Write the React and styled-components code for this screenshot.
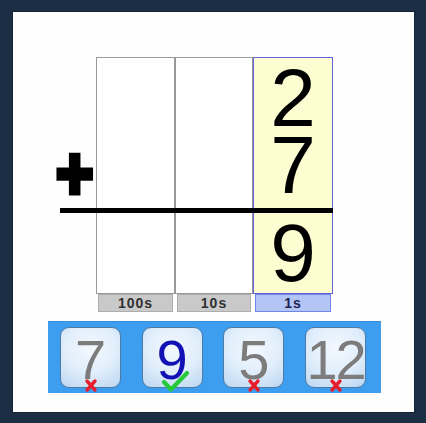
import React from "react";
import styled, { createGlobalStyle } from "styled-components";

const Global = createGlobalStyle`
  html, body { margin: 0; padding: 0; background: #1b2e44; }
  body { font-family: "Liberation Sans", Arial, sans-serif; }
`;

const Frame = styled.div`
  width: 426px;
  height: 423px;
  padding: 12px 0 0 13px;
  box-sizing: border-box;
`;

const Panel = styled.div`
  width: 401px;
  height: 400px;
  background: #fefefe;
  box-shadow: 0 0 0 1px #13233a;
  box-sizing: border-box;
  padding-top: 45px;
  display: flex;
  flex-direction: column;
  align-items: flex-start;
`;

const Board = styled.div`
  margin-left: 47px;
  display: grid;
  grid-template-columns: 36px 79px 78px 80px;
  grid-template-rows: 151px 5px 81px 18px;
`;

const OperatorCell = styled.div`
  grid-column: 1;
  grid-row: 1;
  display: flex;
  align-items: flex-end;
  padding-bottom: 3px;
`;

const Plus = styled.span`
  display: inline-block;
  font-family: "Liberation Sans", Arial, sans-serif;
  font-weight: 700;
  font-size: 64px;
  line-height: 64px;
  color: #000;
  -webkit-text-stroke: 4.5px #000;
  margin-left: -4px;
  transform: scaleY(1.16);
  transform-origin: 50% 49%;
`;

const Cell = styled.div`
  box-sizing: border-box;
  grid-column: ${(p) => p.$col};
  grid-row: ${(p) => p.$row};
  background: ${(p) => (p.$active ? "#fdfdd2" : "#ffffff")};
  border: 1px solid ${(p) => (p.$active ? "#6262e2" : "#999999")};
  border-${(p) => (p.$row === 1 ? "bottom" : "top")}: none;
  display: flex;
  flex-direction: column;
  align-items: center;
  padding-top: ${(p) => (p.$row === 1 ? "6px" : "0")};
`;

const Digit = styled.div`
  font-family: "Liberation Sans", Arial, sans-serif;
  font-size: 82px;
  color: #000;
  line-height: ${(p) => p.$lh}px;
  height: ${(p) => p.$lh}px;
`;

const Rule = styled.div`
  grid-column: 1 / 5;
  grid-row: 2;
  background: #000;
`;

const Label = styled.div`
  grid-column: ${(p) => p.$col};
  grid-row: 4;
  margin: 0 2px;
  box-sizing: border-box;
  background: ${(p) => (p.$active ? "#b3c5f5" : "#c9c9c9")};
  border: 1px solid ${(p) => (p.$active ? "#7086e4" : "#acacac")};
  color: ${(p) => (p.$active ? "#1c2450" : "#303030")};
  font-family: "Liberation Sans", Arial, sans-serif;
  font-weight: 700;
  font-size: 14px;
  letter-spacing: 1px;
  line-height: 16px;
  text-align: center;
`;

const Tray = styled.div`
  margin-top: 9px;
  margin-left: 35px;
  width: 333px;
  height: 72px;
  box-sizing: border-box;
  background: #3d9ef0;
  border-top: 1px solid #3590e0;
  padding: 5px 0 0 12px;
  display: flex;
  gap: 20.7px;
`;

const Tile = styled.div`
  position: relative;
  width: 61px;
  height: 61px;
  box-sizing: border-box;
  border: 1px solid #4d7aa6;
  border-radius: 9px;
  background: radial-gradient(
    ellipse 80% 75% at 50% 35%,
    #f3f8fe 0%,
    #e1eefb 55%,
    #bfd9f2 100%
  );
  padding-top: 4px;
  text-align: center;
  font-family: "Liberation Sans", Arial, sans-serif;
  font-size: 56px;
  line-height: 56px;
  letter-spacing: ${(p) => (p.$wide ? "-2px" : "0")};
  color: ${(p) => (p.$correct ? "#1212b4" : "#7c7c7c")};
`;

const Mark = styled.svg`
  position: absolute;
  left: 50%;
  bottom: ${(p) => p.$bottom}px;
  transform: translateX(${(p) => p.$dx}px);
  overflow: visible;
`;

const Cross = () => (
  <Mark $bottom={-5} $dx={-6} width="12" height="13" viewBox="0 0 12 13">
    <path d="M2 2 L10 11 M10 2 L2 11" stroke="#e81e2c" strokeWidth="3.4" strokeLinecap="round" fill="none" />
  </Mark>
);

const Check = () => (
  <Mark $bottom={-5} $dx={-10} width="27" height="22" viewBox="0 0 27 22">
    <path d="M2 12 L9 19.5 L25 3" stroke="#27c93a" strokeWidth="4.2" strokeLinecap="round" strokeLinejoin="round" fill="none" />
  </Mark>
);

const choices = [
  { v: "7", correct: false },
  { v: "9", correct: true },
  { v: "5", correct: false },
  { v: "12", correct: false },
];

const labels = ["100s", "10s", "1s"];

export default function App() {
  return (
    <>
      <Global />
      <Frame>
        <Panel>
          <Board>
            <OperatorCell>
              <Plus>+</Plus>
            </OperatorCell>
            <Cell $col={2} $row={1} />
            <Cell $col={3} $row={1} />
            <Cell $col={4} $row={1} $active>
              <Digit $lh={67}>2</Digit>
              <Digit $lh={67}>7</Digit>
            </Cell>
            <Rule />
            <Cell $col={2} $row={3} />
            <Cell $col={3} $row={3} />
            <Cell $col={4} $row={3} $active>
              <Digit $lh={80}>9</Digit>
            </Cell>
            {labels.map((l, i) => (
              <Label key={l} $col={i + 2} $active={i === 2}>
                {l}
              </Label>
            ))}
          </Board>
          <Tray>
            {choices.map((c) => (
              <Tile key={c.v} $correct={c.correct} $wide={c.v.length > 1}>
                {c.v}
                {c.correct ? <Check /> : <Cross />}
              </Tile>
            ))}
          </Tray>
        </Panel>
      </Frame>
    </>
  );
}
